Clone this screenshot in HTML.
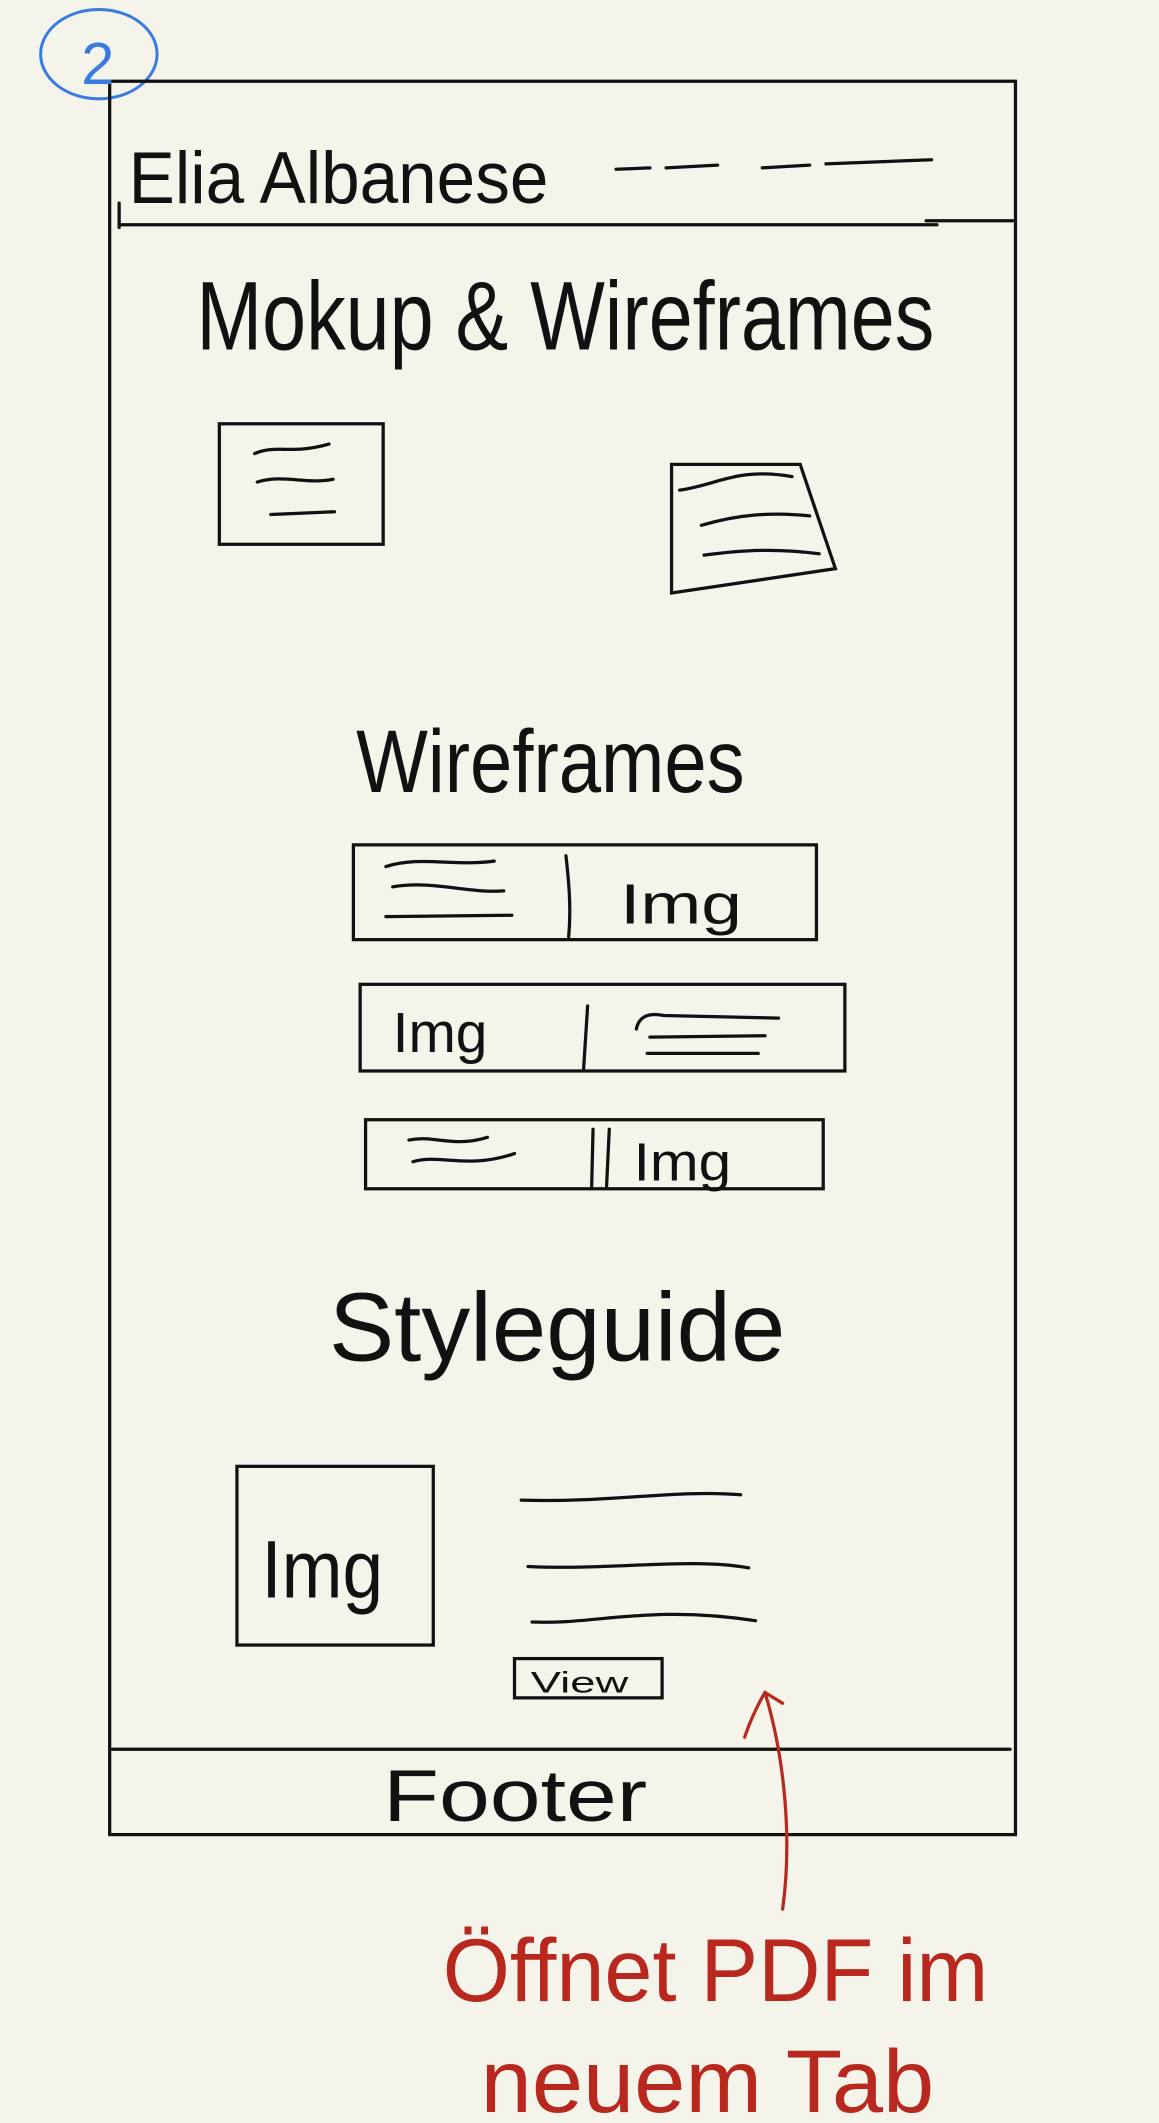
<!DOCTYPE html>
<html><head><meta charset="utf-8"><style>
html,body{margin:0;padding:0;background:#f4f4eb;}
svg{display:block}
text{font-family:"Liberation Sans",sans-serif;}
</style></head><body>
<svg width="1159" height="2123" viewBox="0 0 856 1568" xmlns="http://www.w3.org/2000/svg">
<rect width="856" height="1568" fill="#f4f4eb"/>
<g fill="none" stroke="#111" stroke-width="2.4" stroke-linecap="round">
<ellipse cx="73" cy="40" rx="43" ry="33" stroke="#3a7be0" stroke-width="2.2"/>
<rect x="81" y="60" width="669" height="1295"/>
<path d="M88 166 L692 166 M684 163 L748 163 M88 150 L88 168"/>
<path d="M455 125 L480 124 M492 124 L530 122 M563 124 L598 122 M610 121 L688 118"/>
<rect x="162" y="313" width="121" height="89"/>
<path d="M188 335 C205 328 215 336 243 328 M190 356 C210 350 225 358 246 354 M200 380 L247 378"/>
<path d="M496 343 L591 343 L617 420 L496 438 Z"/>
<path d="M502 362 C530 358 545 345 585 352 M518 388 C545 380 570 378 598 381 M520 410 C550 406 575 405 605 409"/>
<rect x="261" y="624" width="342" height="70"/>
<path d="M285 640 C310 632 335 640 365 636 M290 655 C320 650 345 660 372 658 M285 677 L378 676 M418 632 C420 650 422 670 420 692"/>
<rect x="266" y="727" width="358" height="64"/>
<path d="M434 743 L431 790 M470 760 C472 750 480 748 490 750 L575 752 M480 766 L565 765 M478 778 L560 778"/>
<rect x="270" y="827" width="338" height="51"/>
<path d="M302 842 C320 838 335 848 360 840 M305 858 C325 852 345 864 380 852 M438 834 L437 876 M450 834 L448 876"/>
<rect x="175" y="1083" width="145" height="132"/>
<path d="M385 1108 C450 1110 500 1100 547 1104 M390 1157 C450 1160 510 1150 553 1158 M393 1198 C440 1200 480 1185 558 1197"/>
<rect x="380" y="1225" width="109" height="29"/>
<path d="M83 1292 L746 1292"/>
<path d="M578 1410 C585 1360 580 1300 565 1250 M550 1283 C555 1268 562 1255 565 1250 L578 1258" stroke="#b8281e"/>
</g>
<text x="60" y="62" font-size="44" fill="#3a7be0">2</text>
<text x="95" y="150" font-size="54" textLength="310" lengthAdjust="spacingAndGlyphs" fill="#111">Elia Albanese</text>
<text x="145" y="258" font-size="72" textLength="545" lengthAdjust="spacingAndGlyphs" fill="#111">Mokup &amp; Wireframes</text>
<text x="263" y="585" font-size="66" textLength="287" lengthAdjust="spacingAndGlyphs" fill="#111">Wireframes</text>
<text x="458" y="682" font-size="42" textLength="90" lengthAdjust="spacingAndGlyphs" fill="#111">Img</text>
<text x="290" y="777" font-size="42" textLength="70" lengthAdjust="spacingAndGlyphs" fill="#111">Img</text>
<text x="468" y="872" font-size="40" textLength="72" lengthAdjust="spacingAndGlyphs" fill="#111">Img</text>
<text x="243" y="1005" font-size="72" textLength="337" lengthAdjust="spacingAndGlyphs" fill="#111">Styleguide</text>
<text x="193" y="1180" font-size="60" textLength="90" lengthAdjust="spacingAndGlyphs" fill="#111">Img</text>
<text x="392" y="1250" font-size="22" textLength="72" lengthAdjust="spacingAndGlyphs" fill="#111">View</text>
<text x="283" y="1345" font-size="54" textLength="195" lengthAdjust="spacingAndGlyphs" fill="#111">Footer</text>
<text x="327" y="1478" font-size="66" textLength="403" lengthAdjust="spacingAndGlyphs" fill="#b8281e">Öffnet PDF im</text>
<text x="355" y="1560" font-size="66" textLength="335" lengthAdjust="spacingAndGlyphs" fill="#b8281e">neuem Tab</text>
</svg>
</body></html>
